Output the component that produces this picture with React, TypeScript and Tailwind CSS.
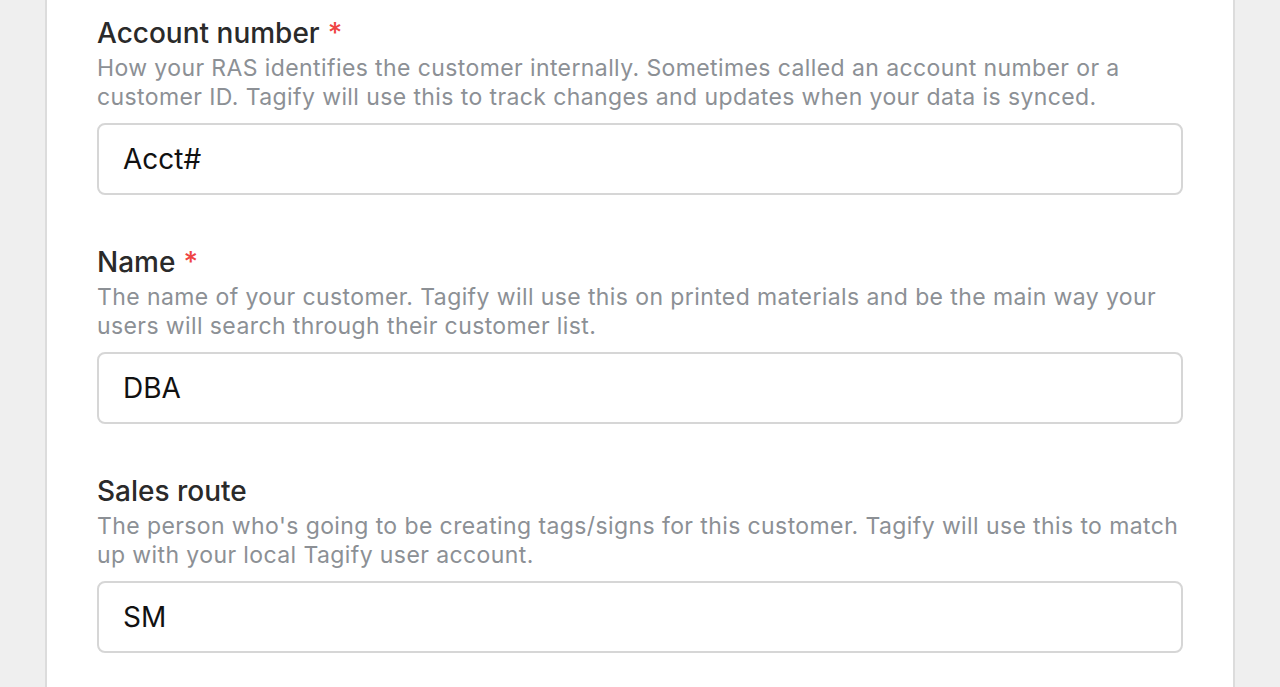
const fields = [
  {
    label: 'Account number',
    required: true,
    help: 'How your RAS identifies the customer internally. Sometimes called an account number or a customer ID. Tagify will use this to track changes and updates when your data is synced.',
    value: 'Acct#',
  },
  {
    label: 'Name',
    required: true,
    help: 'The name of your customer. Tagify will use this on printed materials and be the main way your users will search through their customer list.',
    value: 'DBA',
  },
  {
    label: 'Sales route',
    required: false,
    help: "The person who's going to be creating tags/signs for this customer. Tagify will use this to match up with your local Tagify user account.",
    value: 'SM',
  },
];

export default function App() {
  return (
    <div
      className="min-h-screen bg-[#efefef] px-[45px] overflow-hidden"
      style={{ fontFamily: 'Inter, "Noto Sans", sans-serif' }}
    >
      <div className="min-h-[687px] bg-white border-x-2 border-[#dcdcdc] px-[50px] pt-[15px] pb-10">
        {fields.map((f, i) => (
          <div key={f.label} className={i > 0 ? 'mt-[49px]' : ''}>
            <label className="block text-[28px] leading-[36px] font-medium text-[#2a2a2a]">
              {f.label}
              {f.required && <span className="text-[#ef4444] ml-[8px]">*</span>}
            </label>
            <p className="mt-[3px] text-[23px] leading-[29px] tracking-[0.4px] text-[#8c9095]">{f.help}</p>
            <div className="mt-[11px] h-[72px] flex items-center rounded-lg border-2 border-[#d6d6d6] px-[24px]">
              <span className="text-[28px] text-[#111]">{f.value}</span>
            </div>
          </div>
        ))}
      </div>
    </div>
  );
}
